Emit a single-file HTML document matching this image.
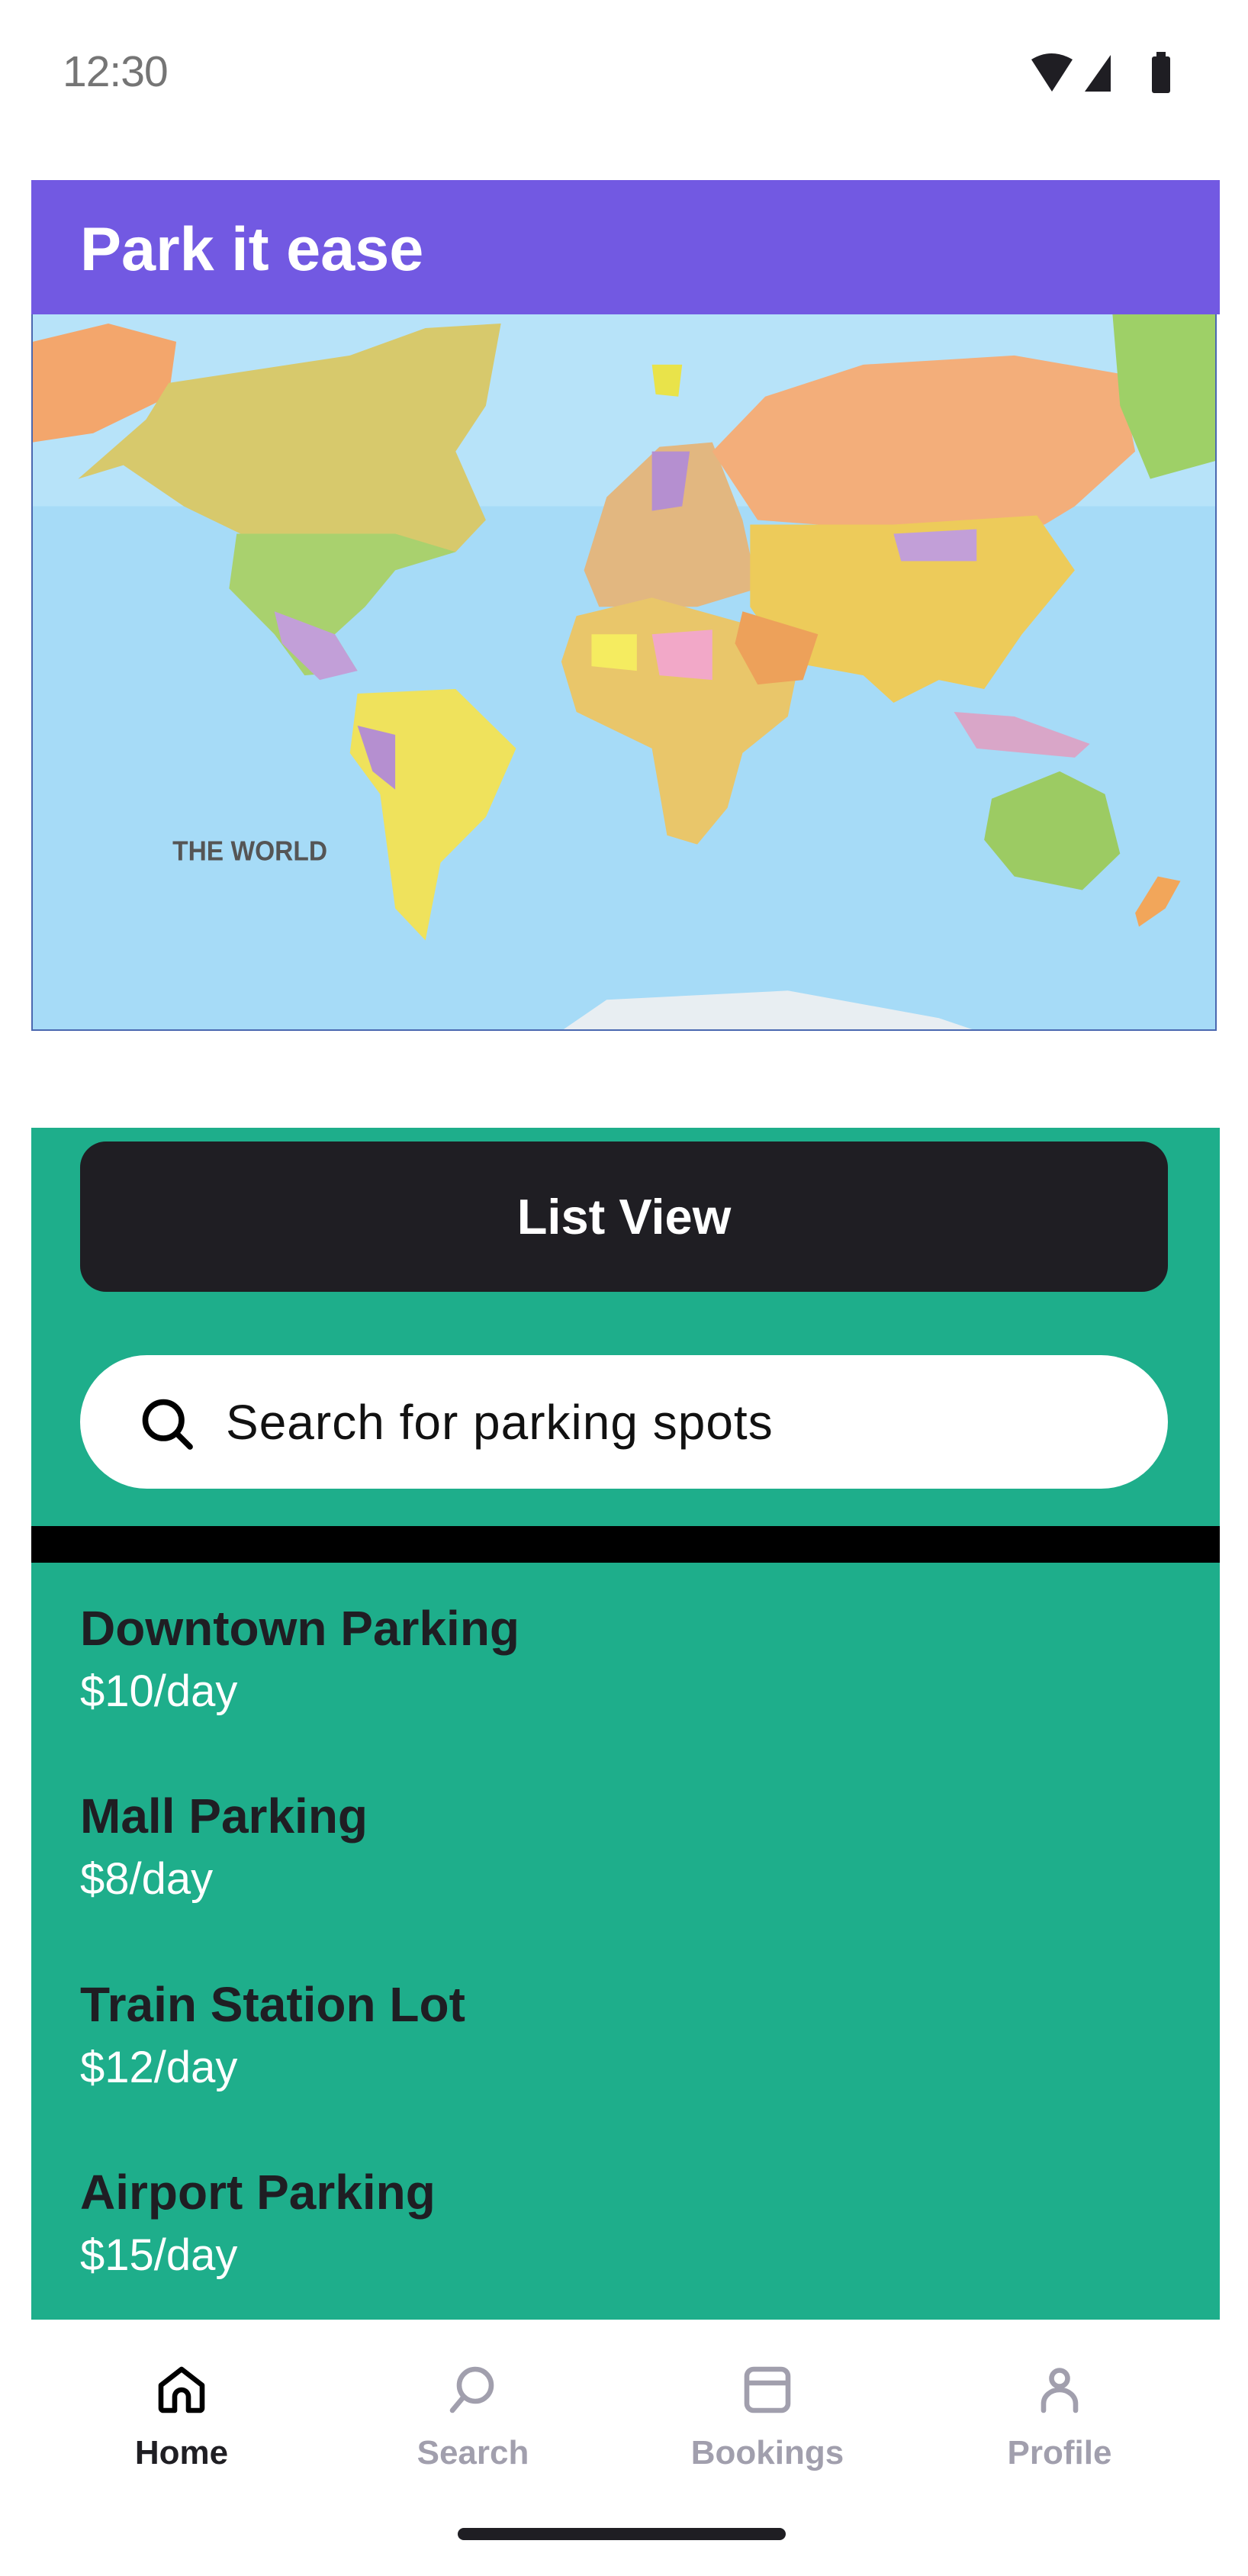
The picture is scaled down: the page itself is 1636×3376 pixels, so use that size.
<!DOCTYPE html>
<html><head><meta charset="utf-8">
<style>
*{margin:0;padding:0;box-sizing:border-box}
body{width:1636px;height:3376px;background:#fff;position:relative;font-family:"Liberation Sans",sans-serif;overflow:hidden}
.abs{position:absolute}
.time{left:82px;top:65px;font-size:57px;color:#757575;line-height:58px;letter-spacing:-1px}
.hdr{left:41px;top:236px;width:1558px;height:176px;background:#7259E2}
.hdr span{position:absolute;left:64px;top:50px;font-size:81px;font-weight:bold;color:#fff;line-height:82px}
.map{left:41px;top:412px;width:1554px;height:939px;border:2px solid #4a68b0;border-top:none;overflow:hidden;background:#a9dcf6}
.green{left:41px;top:1478px;width:1558px;height:1562px;background:#1EAE8B}
.btn{left:105px;top:1496px;width:1426px;height:197px;background:#1F1E23;border-radius:34px;color:#fff;font-weight:bold;font-size:65px;text-align:center;line-height:197px}
.search{left:105px;top:1776px;width:1426px;height:175px;background:#fff;border-radius:88px}
.search span{position:absolute;left:191px;top:54px;font-size:64px;line-height:68px;color:#111;letter-spacing:1px}
.bar{left:41px;top:2000px;width:1558px;height:48px;background:#000}
.it{left:105px;color:#1F1E23}
.it b{display:block;font-size:64px;line-height:72px;font-weight:bold}
.it i{display:block;font-style:normal;font-size:58px;line-height:66px;color:#fff;margin-top:14px}
.nav{top:3190px;width:300px;text-align:center;font-size:44px;color:#A19FAD;font-weight:bold}
.ind{left:600px;top:3313px;width:430px;height:16px;border-radius:8px;background:#1F1E23}
</style></head><body>
<div class="abs time">12:30</div>
<svg class="abs" style="left:1350px;top:68px" width="200" height="56" viewBox="0 0 200 56">
<path d="M2 10 Q28 -6 56 10 L29 52 Z" fill="#1F1E23"/>
<path d="M72 52 L106 4 L106 52 Z" fill="#1F1E23"/>
<rect x="160" y="6" width="24" height="48" rx="3" fill="#1F1E23"/><rect x="166" y="0" width="12" height="8" fill="#1F1E23"/>
</svg>
<div class="abs hdr"><span>Park it ease</span></div>
<div class="abs map">
<svg width="1552" height="939" viewBox="0 0 1568 1568" preserveAspectRatio="none">
<rect width="1568" height="1568" fill="#a6dbf7"/>
<rect x="0" y="0" width="1568" height="420" fill="#c3e7fa" opacity=".6"/>
<polygon points="0,60 100,20 190,60 180,180 80,260 0,280" fill="#F3A66C"/>
<polygon points="180,150 300,120 420,90 520,30 620,20 600,200 560,300 600,450 560,520 480,520 300,500 200,420 120,330 60,360 150,230" fill="#D7C96C"/>
<polygon points="270,480 480,480 560,520 480,560 440,640 400,700 430,780 360,790 320,700 260,600" fill="#A9D16E"/>
<polygon points="320,650 400,700 430,780 380,800 330,720" fill="#C29FD8"/>
<polygon points="820,110 860,110 855,180 825,175" fill="#E9E34A"/>
<polygon points="430,830 560,820 640,950 600,1100 540,1200 520,1370 480,1300 460,1050 420,960" fill="#EFE25C"/>
<polygon points="430,900 480,920 480,1040 450,1000" fill="#B58FD0"/>
<polygon points="760,400 830,290 900,280 940,450 960,600 880,640 750,640 730,560" fill="#E2B780"/>
<polygon points="820,300 870,300 860,420 820,430" fill="#B58FD0"/>
<polygon points="720,660 820,620 950,680 1010,800 1000,880 940,960 920,1080 880,1160 840,1140 820,950 720,870 700,760" fill="#E9C66A"/>
<polygon points="820,700 900,690 900,800 830,790" fill="#F2A8C8"/>
<polygon points="740,700 800,700 800,780 740,770" fill="#F5EC60"/>
<polygon points="900,300 970,180 1100,110 1300,90 1440,130 1460,300 1380,420 1340,460 1120,470 960,450" fill="#F3AE7A"/>
<polygon points="950,460 1140,460 1330,440 1380,560 1310,700 1260,820 1200,800 1140,850 1100,790 1000,760 950,640" fill="#EDCB5A"/>
<polygon points="1140,480 1250,470 1250,540 1150,540" fill="#C29FD8"/>
<polygon points="940,650 1040,700 1020,800 960,810 930,720" fill="#EDA15A"/>
<polygon points="1220,870 1300,880 1400,940 1380,970 1250,950" fill="#D9A6C8"/>
<polygon points="1270,1060 1360,1000 1420,1050 1440,1180 1390,1260 1300,1230 1260,1150" fill="#9CCB63"/>
<polygon points="1490,1230 1520,1240 1500,1300 1465,1340 1460,1310" fill="#F2A65A"/>
<polygon points="1430,0 1568,0 1568,320 1480,360 1440,200" fill="#9ED067"/>
<polygon points="700,1568 760,1500 1000,1480 1200,1540 1250,1568" fill="#e8eef2"/>
<text x="185" y="1195" font-family="Liberation Sans" font-weight="bold" font-size="60" fill="#555" textLength="205" lengthAdjust="spacingAndGlyphs">THE WORLD</text>
</svg>
</div>
<div class="abs green"></div>
<div class="abs btn">List View</div>
<div class="abs search">
<svg class="abs" style="left:76px;top:52px" width="76" height="76" viewBox="0 0 24 24" fill="none" stroke="#000" stroke-width="2.4" stroke-linecap="round"><circle cx="10.5" cy="10.5" r="7.5"/><path d="M16 16 L21.5 21.5"/></svg>
<span>Search for parking spots</span></div>
<div class="abs bar"></div>
<div class="abs it" style="top:2098px"><b>Downtown Parking</b><i>$10/day</i></div>
<div class="abs it" style="top:2344px"><b>Mall Parking</b><i>$8/day</i></div>
<div class="abs it" style="top:2591px"><b>Train Station Lot</b><i>$12/day</i></div>
<div class="abs it" style="top:2837px"><b>Airport Parking</b><i>$15/day</i></div>
<svg class="abs" style="left:202px;top:3096px" width="72" height="72" viewBox="0 0 24 24" fill="none" stroke="#000" stroke-width="2.2" stroke-linejoin="round"><path d="M3 10 L12 3 L21 10 V20 a1 1 0 0 1-1 1 H15 V15 a3 3 0 0 0-6 0 V21 H4 a1 1 0 0 1-1-1 Z"/></svg>
<svg class="abs" style="left:584px;top:3096px" width="72" height="72" viewBox="0 0 24 24" fill="none" stroke="#A19FAD" stroke-width="2.2" stroke-linecap="round"><circle cx="13" cy="10" r="7"/><path d="M8 15 L3 21"/></svg>
<svg class="abs" style="left:970px;top:3096px" width="72" height="72" viewBox="0 0 24 24" fill="none" stroke="#A19FAD" stroke-width="2.2"><rect x="3" y="3" width="18" height="18" rx="3"/><path d="M3 9 H21"/></svg>
<svg class="abs" style="left:1353px;top:3096px" width="72" height="72" viewBox="0 0 24 24" fill="none" stroke="#A19FAD" stroke-width="2.2" stroke-linecap="round"><circle cx="12" cy="7" r="3.5"/><path d="M5 21 V18 a7 6 0 0 1 14 0 V21"/></svg>
<div class="abs nav" style="left:88px;color:#1F1E23">Home</div>
<div class="abs nav" style="left:470px">Search</div>
<div class="abs nav" style="left:856px">Bookings</div>
<div class="abs nav" style="left:1239px">Profile</div>
<div class="abs ind"></div>
</body></html>
